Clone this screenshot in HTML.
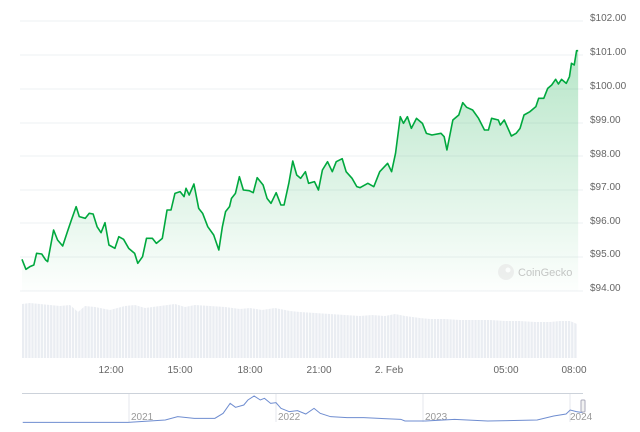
<!DOCTYPE html>
<html><head><meta charset="utf-8"><style>
html,body{margin:0;padding:0;background:#fff;width:640px;height:432px;overflow:hidden}
svg{display:block;font-family:"Liberation Sans",sans-serif}
</style></head><body>
<svg width="640" height="432" viewBox="0 0 640 432">
<defs>
<linearGradient id="g" x1="0" y1="0" x2="0" y2="1">
<stop offset="0" stop-color="#1fb155" stop-opacity="0.32"/>
<stop offset="1" stop-color="#1fb155" stop-opacity="0.01"/>
</linearGradient>
<pattern id="bars" x="22" y="0" width="3.12" height="10" patternUnits="userSpaceOnUse">
<rect x="0" y="0" width="2.3" height="10" fill="#eaedf2"/>
</pattern>
<clipPath id="vc">
<polygon points="22,358 22,304 30,303 40,304 50,305 60,306 70,305 78,312 85,306 95,307 110,310 125,306 135,305 145,308 160,306 175,304 185,307 195,305 210,306 225,307 240,309 250,308 262,310 275,308 290,311 300,312 315,313 330,314 345,315 360,316 372,315 385,316 395,314 405,316 420,318 430,319 445,319 460,320 475,320 490,320 505,321 520,321 535,322 550,322 560,321 570,321 577,324 577,358"/>
</clipPath>
</defs>
<g stroke="#eef0f3" stroke-width="1">
<line x1="20" y1="21" x2="583" y2="21"/>
<line x1="20" y1="55" x2="583" y2="55"/>
<line x1="20" y1="89" x2="583" y2="89"/>
<line x1="20" y1="123" x2="583" y2="123"/>
<line x1="20" y1="156" x2="583" y2="156"/>
<line x1="20" y1="190" x2="583" y2="190"/>
<line x1="20" y1="223" x2="583" y2="223"/>
<line x1="20" y1="257" x2="583" y2="257"/>
<line x1="20" y1="291" x2="583" y2="291"/>
</g>
<g fill="#666" font-size="10">
<text x="590" y="21">$102.00</text>
<text x="590" y="55">$101.00</text>
<text x="590" y="89">$100.00</text>
<text x="590" y="123">$99.00</text>
<text x="590" y="157">$98.00</text>
<text x="590" y="190">$97.00</text>
<text x="590" y="224">$96.00</text>
<text x="590" y="257">$95.00</text>
<text x="590" y="291">$94.00</text>
</g>
<g transform="translate(20,0) scale(0.3953,0.33333)">
<path fill="url(#g)" stroke="none" d="M5,778 L15,808 L25,800 L35,795 L42,760 L55,762 L65,780 L70,785 L85,690 L95,720 L108,738 L120,695 L130,660 L142,620 L150,650 L165,655 L175,640 L185,642 L195,680 L205,698 L215,668 L225,735 L240,745 L250,710 L262,718 L275,745 L290,760 L298,790 L310,770 L320,715 L335,715 L345,730 L360,715 L372,630 L382,630 L392,580 L405,575 L415,590 L420,565 L428,585 L440,552 L452,625 L462,640 L475,680 L490,705 L503,750 L512,680 L520,635 L530,620 L535,595 L545,580 L555,530 L565,570 L580,572 L590,578 L600,533 L615,555 L625,595 L635,610 L648,578 L660,615 L668,615 L680,550 L690,483 L700,525 L710,535 L722,515 L730,550 L745,545 L755,570 L765,510 L778,485 L790,515 L800,485 L815,476 L825,515 L840,535 L852,560 L860,563 L880,550 L895,560 L910,515 L930,490 L940,515 L950,460 L962,350 L970,370 L980,350 L990,385 L1003,355 L1018,370 L1028,400 L1042,405 L1065,400 L1073,410 L1080,450 L1095,360 L1110,345 L1120,308 L1130,322 L1145,330 L1160,355 L1175,390 L1185,390 L1193,355 L1210,360 L1215,375 L1225,360 L1243,408 L1255,400 L1265,385 L1275,345 L1290,335 L1305,320 L1312,295 L1325,295 L1335,265 L1345,255 L1355,238 L1362,252 L1370,238 L1382,250 L1390,230 L1395,190 L1402,195 L1408,152 L1412,152 L1412,873 L5,873 Z"/>
<path fill="none" stroke="#00a83e" stroke-width="1.6" vector-effect="non-scaling-stroke" stroke-linejoin="round" d="M5,778 L15,808 L25,800 L35,795 L42,760 L55,762 L65,780 L70,785 L85,690 L95,720 L108,738 L120,695 L130,660 L142,620 L150,650 L165,655 L175,640 L185,642 L195,680 L205,698 L215,668 L225,735 L240,745 L250,710 L262,718 L275,745 L290,760 L298,790 L310,770 L320,715 L335,715 L345,730 L360,715 L372,630 L382,630 L392,580 L405,575 L415,590 L420,565 L428,585 L440,552 L452,625 L462,640 L475,680 L490,705 L503,750 L512,680 L520,635 L530,620 L535,595 L545,580 L555,530 L565,570 L580,572 L590,578 L600,533 L615,555 L625,595 L635,610 L648,578 L660,615 L668,615 L680,550 L690,483 L700,525 L710,535 L722,515 L730,550 L745,545 L755,570 L765,510 L778,485 L790,515 L800,485 L815,476 L825,515 L840,535 L852,560 L860,563 L880,550 L895,560 L910,515 L930,490 L940,515 L950,460 L962,350 L970,370 L980,350 L990,385 L1003,355 L1018,370 L1028,400 L1042,405 L1065,400 L1073,410 L1080,450 L1095,360 L1110,345 L1120,308 L1130,322 L1145,330 L1160,355 L1175,390 L1185,390 L1193,355 L1210,360 L1215,375 L1225,360 L1243,408 L1255,400 L1265,385 L1275,345 L1290,335 L1305,320 L1312,295 L1325,295 L1335,265 L1345,255 L1355,238 L1362,252 L1370,238 L1382,250 L1390,230 L1395,190 L1402,195 L1408,152 L1412,152"/>
</g>
<g opacity="0.55">
<circle cx="506" cy="272" r="8" fill="#e4e4e4"/>
<circle cx="508" cy="270" r="2.5" fill="#fff"/>
<text x="518" y="276" font-size="11" fill="#999">CoinGecko</text>
</g>
<rect x="22" y="300" width="556" height="58" fill="url(#bars)" clip-path="url(#vc)"/>
<g fill="#666" font-size="10" text-anchor="middle">
<text x="111" y="373">12:00</text>
<text x="180" y="373">15:00</text>
<text x="250" y="373">18:00</text>
<text x="319" y="373">21:00</text>
<text x="389" y="373">2. Feb</text>
<text x="506" y="373">05:00</text>
<text x="574" y="373">08:00</text>
</g>
<line x1="22" y1="393.5" x2="583" y2="393.5" stroke="#ccd2da"/>
<g stroke="#e4e7ec">
<line x1="129" y1="394" x2="129" y2="422"/>
<line x1="276" y1="394" x2="276" y2="422"/>
<line x1="423" y1="394" x2="423" y2="422"/>
<line x1="570" y1="394" x2="570" y2="422"/>
</g>
<g fill="#999" font-size="10">
<text x="131" y="420">2021</text>
<text x="278" y="420">2022</text>
<text x="425" y="420">2023</text>
<text x="570" y="420">2024</text>
</g>
<g transform="translate(0,290) scale(0.4132,0.33333)">
<path fill="none" stroke="#6f8dd0" stroke-width="1" vector-effect="non-scaling-stroke" d="M55,397 L310,397 L400,390 L430,380 L470,385 L520,385 L540,370 L557,340 L570,352 L590,345 L600,330 L615,318 L630,330 L640,325 L655,340 L668,338 L680,355 L700,365 L720,362 L740,372 L760,355 L775,370 L800,380 L840,383 L880,383 L970,388 L980,393 L1030,393 L1100,388 L1180,393 L1300,390 L1340,378 L1370,372 L1380,360 L1395,365 L1410,368"/>
</g>
<rect x="581" y="400" width="4" height="12" rx="1" fill="#f2f2f2" stroke="#aab"/>
</svg>
</body></html>
